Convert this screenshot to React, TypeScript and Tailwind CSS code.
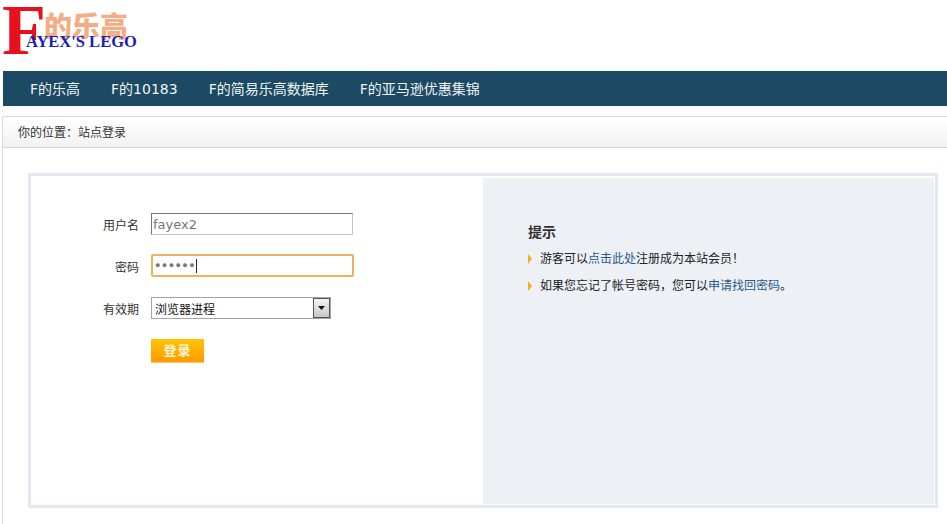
import { ReactNode } from "react";

const cjk = "font-['Liberation_Sans','Noto_Sans_CJK_SC',sans-serif]";

function Logo() {
  return (
    <div className="relative w-[140px] h-[56px]">
      <span className="absolute left-[44px] top-[7px] text-[28px] leading-[36px] font-black text-[#f4ac84] font-['Noto_Sans_CJK_SC',sans-serif] whitespace-nowrap">的乐高</span>
      <span className="absolute left-[2px] top-0 text-[72px] leading-[60px] font-bold text-[#e8101c] font-['Liberation_Serif',serif]">F</span>
      <span className="absolute left-[26px] top-[33px] text-[16.5px] leading-[18px] font-bold text-[#1a1fb8] font-['Liberation_Serif',serif] whitespace-nowrap">AYEX'S LEGO</span>
    </div>
  );
}

function Row({ label, children }: { label: string; children: ReactNode }) {
  return (
    <div className="flex items-center">
      <label className="w-[120px] pr-[12px] pt-[4px] text-right text-[12px] text-[#333]">{label}</label>
      {children}
    </div>
  );
}

function Tip({ children }: { children: ReactNode }) {
  return (
    <li className="flex items-center h-[27px] text-[12px] text-[#222]">
      <svg width="4" height="10" viewBox="0 0 4 10" className="mr-[8px]">
        <path d="M0 0L4 5L0 10Z" fill="#f5ae1e" />
      </svg>
      <span>{children}</span>
    </li>
  );
}

export default function App() {
  return (
    <div className={`${cjk} w-[947px] h-[524px] overflow-hidden bg-white`}>
      <div className="h-[71px]">
        <Logo />
      </div>
      <nav className="ml-[3px] h-[35px] bg-[#1c4a63] flex items-center pl-[27px] pt-[2px] gap-[31px] text-[14px] text-[#f0f5f8] font-['DejaVu_Sans','Noto_Sans_CJK_SC',sans-serif]">
        <a>F的乐高</a>
        <a>F的10183</a>
        <a>F的简易乐高数据库</a>
        <a>F的亚马逊优惠集锦</a>
      </nav>
      <div className="mt-[10px] ml-[2px] border-l border-[#dcdcdc] h-[408px]">
        <div className="h-[32px] border-y border-[#d8d8d8] bg-gradient-to-b from-white to-[#f2f2f2] flex items-center pl-[15px] pt-[2px] text-[12px] text-[#333]">
          你的位置：站点登录
        </div>
        <div className="mt-[25px] ml-[25px] w-[910px] h-[335px] border-[3px] border-[#e1e8ef] pt-[2px] pr-[1px] pb-[1px] flex">
          <form className="w-[452px] pt-[35px] flex flex-col">
            <Row label="用户名">
              <input readOnly value="fayex2" className="w-[202px] h-[22px] border border-[#c4c4c4] border-t-[#777] border-l-[#777] px-[1px] text-[13px] text-[#777] outline-none font-['DejaVu_Sans',sans-serif]" />
            </Row>
            <div className="mt-[19px]">
              <Row label="密码">
                <div className="w-[203px] h-[23px] border-2 border-[#e8b45c] rounded-[2px] flex items-center pl-[2px] text-[9px] tracking-[1.4px] text-[#777]">
                  ●●●●●●<span className="w-px h-[14px] bg-[#222]" />
                </div>
              </Row>
            </div>
            <div className="mt-[20px]">
              <Row label="有效期">
                <div className="w-[180px] h-[22px] border border-[#a5a5a5] flex items-center justify-between pl-[3px] text-[12px] text-[#111]">
                  <span className="pt-[3px]">浏览器进程</span>
                  <span className="w-[17px] h-[20px] border border-[#555] bg-gradient-to-b from-[#f4f4f4] to-[#c8c8c8] flex items-center justify-center">
                    <svg width="7" height="4" viewBox="0 0 7 4"><path d="M0 0H7L3.5 4Z" fill="#111" /></svg>
                  </span>
                </div>
              </Row>
            </div>
            <button type="button" className="mt-[20px] ml-[120px] w-[53px] h-[24px] pt-[1px] bg-gradient-to-b from-[#ffc400] to-[#ff9a00] border-b border-[#f0c878] text-[13px] font-bold tracking-[1px] text-[#fff4d8]">
              登录
            </button>
          </form>
          <div className="flex-1 bg-[#edf0f5] pl-[45px] pt-[44px]">
            <h3 className="text-[14px] leading-[20px] font-bold text-[#333] mb-[3px]">提示</h3>
            <ul>
              <Tip>
                游客可以<a className="text-[#1f5a8a]">点击此处</a>注册成为本站会员！
              </Tip>
              <Tip>
                如果您忘记了帐号密码，您可以<a className="text-[#1f5a8a]">申请找回密码</a>。
              </Tip>
            </ul>
          </div>
        </div>
      </div>
    </div>
  );
}
